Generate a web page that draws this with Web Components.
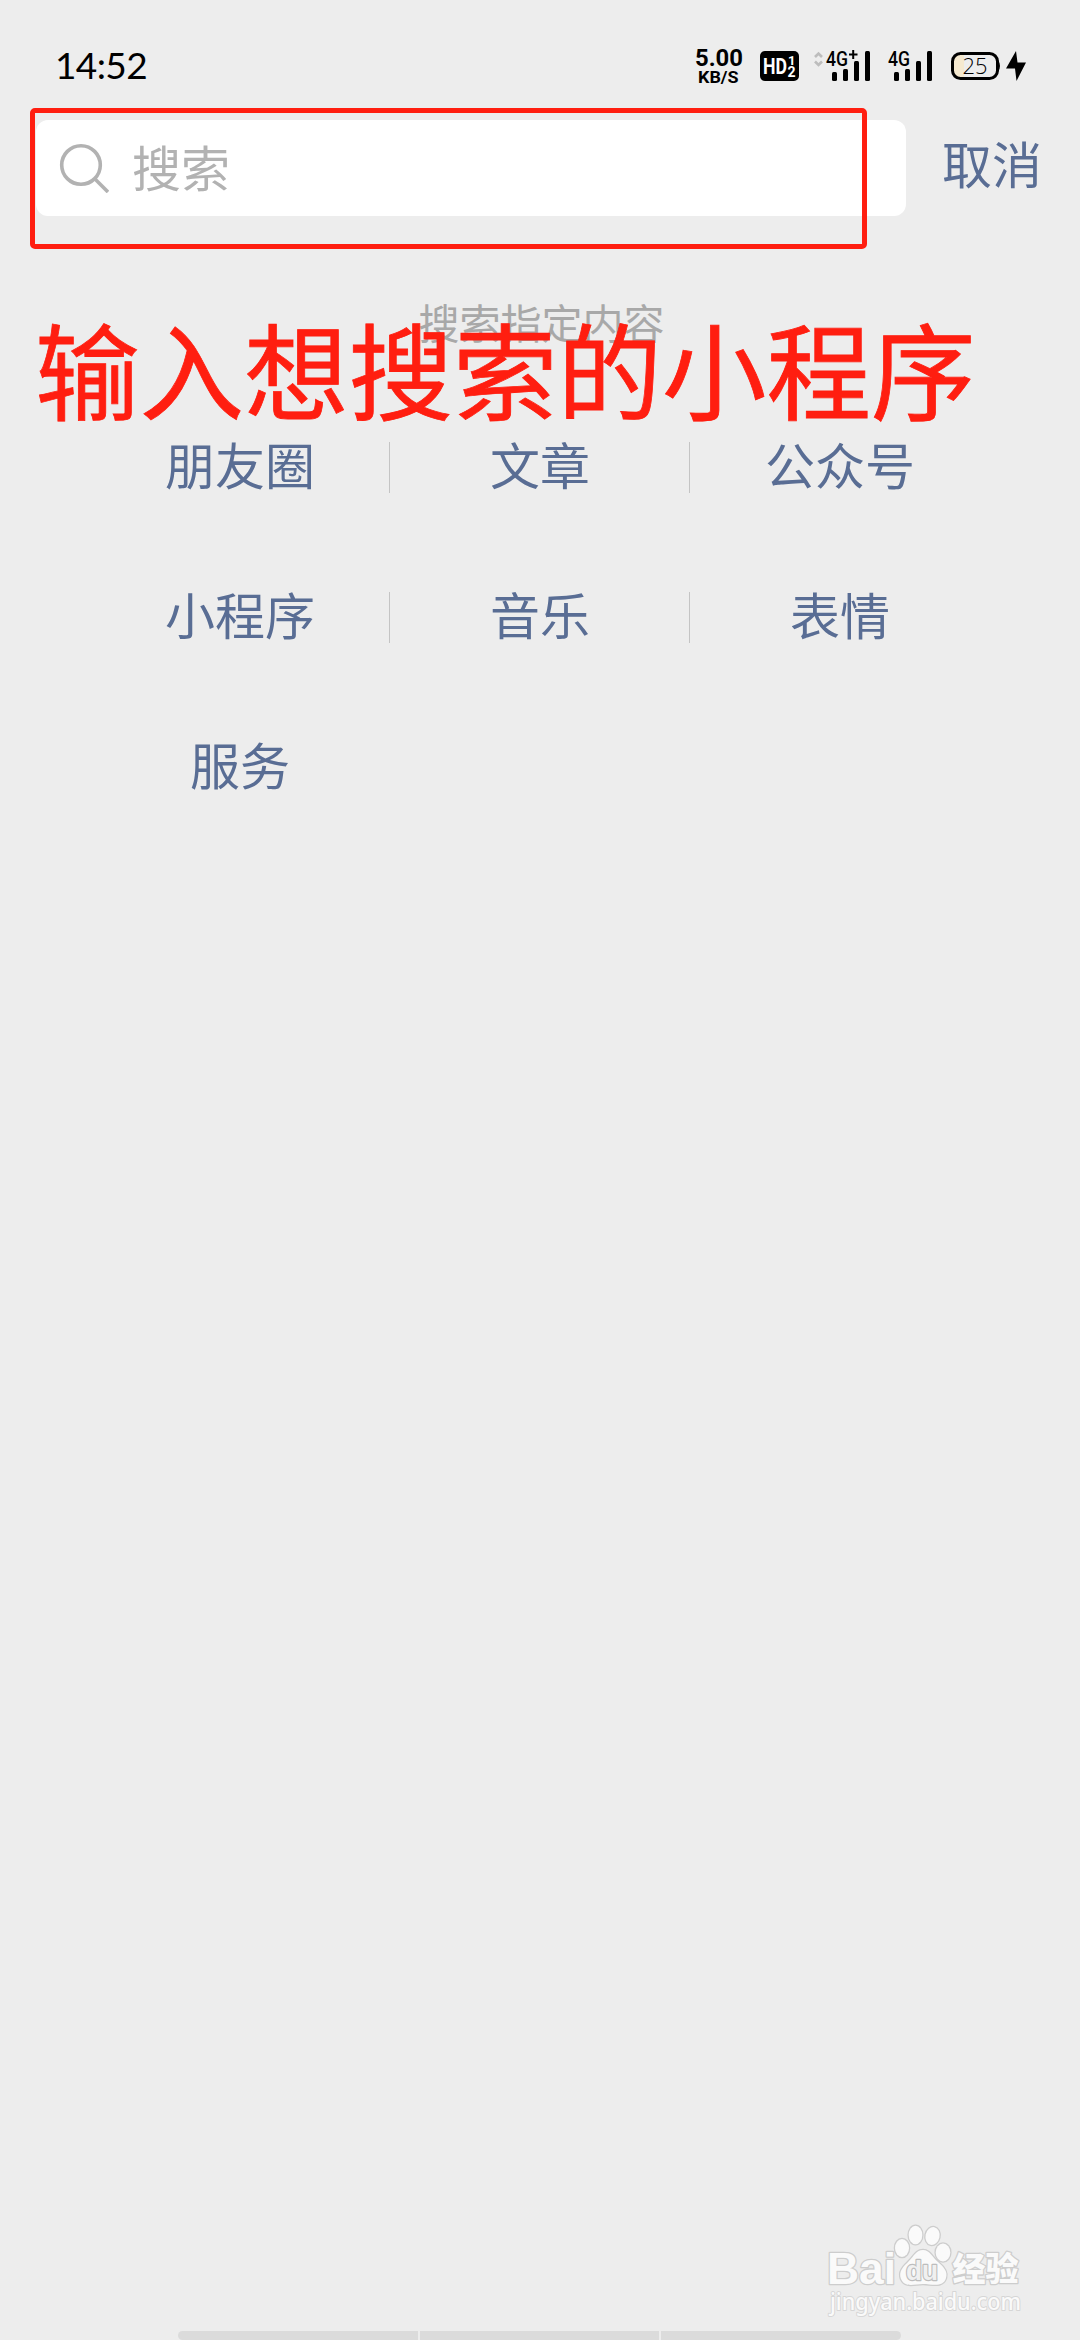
<!DOCTYPE html>
<html lang="zh-CN">
<head>
<meta charset="utf-8">
<title>搜索</title>
<style>
  html, body {
    margin: 0;
    height: 100%;
    background: #ededed;
    overflow: hidden;
  }
  body {
    font-family: Roboto, "Noto Sans CJK SC", sans-serif;
    --link: #596d94;
    --mark: #ff1e10;
  }
</style>
</head>
<body>
<search-page></search-page>

<script>
class NetSpeed extends HTMLElement {
  constructor() {
    super();
    this.attachShadow({ mode: 'open' }).innerHTML = `
      <style>
        :host { display: block; width: 47px; height: 30px; }
        svg { display: block; overflow: visible; }
        text { font-family: Roboto, sans-serif; font-weight: 700; }
      </style>
      <svg width="47" height="30">
        <text x="0" y="15" font-size="24" textLength="48" lengthAdjust="spacingAndGlyphs">5.00</text>
        <text x="3" y="32" font-size="17" textLength="40.5" lengthAdjust="spacingAndGlyphs">KB/S</text>
      </svg>
    `;
  }
}
customElements.define("net-speed", NetSpeed);

class HdBadge extends HTMLElement {
  constructor() {
    super();
    this.attachShadow({ mode: 'open' }).innerHTML = `
      <style>
        :host { display: block; width: 39px; height: 30px; }
        svg { display: block; }
        text { font-family: Roboto, sans-serif; font-weight: 700; fill: #fff; }
      </style>
      <svg width="39" height="30">
        <rect width="39" height="30" rx="5"/>
        <text x="3" y="23" font-size="22" textLength="24" lengthAdjust="spacingAndGlyphs">HD</text>
        <text x="28" y="14" font-size="13">1</text>
        <text x="27.500" y="25.5" font-size="14">2</text>
      </svg>
    `;
  }
}
customElements.define("hd-badge", HdBadge);

class SignalMeter extends HTMLElement {
  connectedCallback() {
    const plus = this.hasAttribute("plus");
    // the data arrows take 12px in front of the label
    const x = plus ? 12 : 0;
    const bars = [[6, 21], [17, 18], [28, 10], [39, 0]];
    this.attachShadow({ mode: 'open' }).innerHTML = `
      <style>
        :host { display: block; height: 30px; }
        svg { display: block; overflow: visible; }
        text { font-family: Roboto, sans-serif; font-weight: 500; }
      </style>
      <svg width="${x + 44}" height="30">
        ${plus ? `
          <path d="M1 6 L4.5 2.5 L8 6 M1 10.5 L4.5 14 L8 10.5" fill="none" stroke="#bdbdbd" stroke-width="2.6"/>
          <path d="M35 3.5 h8.5 M39.2 -1 v9" stroke="#000" stroke-width="2"/>
        ` : ""}
        <text x="${x}" y="15" font-size="20.5" textLength="22" lengthAdjust="spacingAndGlyphs">4G</text>
        ${bars.map(([bx, by]) => `<rect x="${x + bx}" y="${by}" width="5" height="${30 - by}" rx="1.5"/>`).join("")}
      </svg>
    `;
  }
}
customElements.define("signal-meter", SignalMeter);

class BatteryMeter extends HTMLElement {
  constructor() {
    super();
    this.attachShadow({ mode: 'open' }).innerHTML = `
      <style>
        :host { display: block; width: 75px; height: 30px; }
        svg { display: block; overflow: visible; }
        text { font-family: "Open Sans", sans-serif; font-size: 21.5px; font-weight: 300; }
      </style>
      <svg width="75" height="30">
        <path d="M13 3 H10 Q1.5 3 1.5 11 V19 Q1.5 27 10 27 H13 Z" fill="#f5e9cf"/>
        <rect x="1.5" y="2.5" width="45" height="25" rx="8" fill="none" stroke="#000" stroke-width="3"/>
        <path d="M47 9 Q51 15 47 21 Z"/>
        <text x="11.5" y="22.5" textLength="25" lengthAdjust="spacingAndGlyphs">25</text>
        <path d="M65 0 L55 17.5 H64 L65.5 30 L75 11.5 H66.5 Z"/>
      </svg>
    `;
  }
}
customElements.define("battery-meter", BatteryMeter);

class StatusBar extends HTMLElement {
  constructor() {
    super();
    this.attachShadow({ mode: 'open' }).innerHTML = `
      <style>
        :host {
          display: flex;
          align-items: flex-start;
          box-sizing: border-box;
          height: 120px;
          padding: 51px 54px 0 55px;
          color: #000;
        }
        time {
          font: 400 37px/28px Lato, sans-serif;
          letter-spacing: -0.6px;
          margin-right: auto;
        }
        hd-badge { margin-left: 18px; }
        signal-meter { margin-left: 15px; }
        signal-meter + signal-meter { margin-left: 18px; }
        battery-meter { margin-left: 19px; }
      </style>
      <time>14:52</time>
      <net-speed></net-speed>
      <hd-badge></hd-badge>
      <signal-meter plus></signal-meter>
      <signal-meter></signal-meter>
      <battery-meter></battery-meter>
    `;
  }
}
customElements.define("status-bar", StatusBar);

class SearchBar extends HTMLElement {
  constructor() {
    super();
    this.attachShadow({ mode: 'open' }).innerHTML = `
      <style>
        :host { display: flex; height: 96px; padding-left: 36px; }
        .field {
          display: flex;
          align-items: center;
          width: 870px;
          background: #fff;
          border-radius: 12px;
          color: #b2b2b2;
          font-size: 49px;
        }
        .text { padding-bottom: 6px; }
        svg { margin: 0 23px 0 23px; }
        .cancel {
          margin-left: 36px;
          font-size: 50px;
          line-height: 95px;
          color: var(--link);
        }
      </style>
      <div class="field">
        <svg width="50" height="50" fill="none" stroke="#b2b2b2" stroke-width="3.6">
          <circle cx="22" cy="22" r="19.3"/>
          <path d="M35.5 35.5 L49 49"/>
        </svg>
        <div class="text"><slot></slot></div>
      </div>
      <div class="cancel"><slot name="cancel"></slot></div>
    `;
  }
}
customElements.define("search-bar", SearchBar);

class CategoryGrid extends HTMLElement {
  constructor() {
    super();
    this.attachShadow({ mode: 'open' }).innerHTML = `
      <style>
        :host {
          display: grid;
          grid-template-columns: repeat(3, 300px);
          grid-auto-rows: 150px;
          justify-content: center;
        }
        ::slotted(*) {
          display: flex;
          align-items: center;
          justify-content: center;
          box-sizing: border-box;
          padding-bottom: 8px;
          font-size: 50px;
          color: var(--link);
          background: linear-gradient(#c4c4c4, #c4c4c4) no-repeat 299px 50px / 0 51px;
        }
        /* thin line after the first two columns */
        ::slotted(.line) { background-size: 1px 51px; }
      </style>
      <slot></slot>
    `;
  }
}
customElements.define("category-grid", CategoryGrid);

class NavHint extends HTMLElement {
  constructor() {
    super();
    this.attachShadow({ mode: 'open' }).innerHTML = `
      <style>
        :host {
          display: flex;
          gap: 2px;
          width: 723px;
          height: 9px;
          border-radius: 5px;
          overflow: hidden;
        }
        i { flex: 1; background: #dbdbdb; }
      </style>
      <i></i><i></i><i></i>
    `;
  }
}
customElements.define("nav-hint", NavHint);

class BaiduMark extends HTMLElement {
  constructor() {
    super();
    this.attachShadow({ mode: 'open' }).innerHTML = `
      <style>
        :host { display: block; }
        svg { display: block; overflow: visible; }
        svg > * { fill: #fafafa; stroke: #cdcdcd; stroke-width: 2.6; paint-order: stroke; stroke-linejoin: round; }
        .latin { font-family: "Liberation Sans", sans-serif; font-weight: 700; }
        .han { font-family: "Noto Sans CJK SC", sans-serif; font-weight: 900; }
        .site { font-family: "Noto Sans", sans-serif; font-weight: 500; stroke: #d6d6d6; stroke-width: 2; }
        .du { fill: #f0f0f0; stroke: #bdbdbd; stroke-width: 2.4; }
      </style>
      <svg width="200" height="96">
        <text class="latin" x="-2" y="60" font-size="44" textLength="69" lengthAdjust="spacingAndGlyphs">Bai</text>
        <ellipse cx="73" cy="24" rx="7" ry="9"/>
        <ellipse cx="86.5" cy="11" rx="6.8" ry="9.3"/>
        <ellipse cx="103.5" cy="12" rx="7" ry="9" transform="rotate(12 103.5 12)"/>
        <ellipse cx="114" cy="28.5" rx="7.3" ry="9"/>
        <path d="M94 26 C101 26 103 33 109 38 C115 43 119 48 117 54 C114 64 103 60 94 60 C85 60 76 64 72 55 C69 47 75 42 80 37 C85 32 87 26 94 26 Z"/>
        <text class="latin du" x="77" y="56" font-size="27" textLength="32" lengthAdjust="spacingAndGlyphs">du</text>
        <text class="han" x="123.5" y="57" font-size="33" textLength="66" lengthAdjust="spacingAndGlyphs">经验</text>
        <text class="site" x="1" y="86" font-size="23" textLength="191" lengthAdjust="spacingAndGlyphs">jingyan.baidu.com</text>
      </svg>
    `;
  }
}
customElements.define("baidu-mark", BaiduMark);

class SearchPage extends HTMLElement {
  constructor() {
    super();
    this.attachShadow({ mode: 'open' }).innerHTML = `
      <style>
        :host {
          position: relative;
          display: flex;
          flex-direction: column;
          width: 1080px;
          height: 2340px;
          overflow: hidden;
        }
        .hint {
          margin-top: 82px;
          height: 94px;
          text-align: center;
          font-size: 41px;
          line-height: 54px;
          color: #a8a8a8;
          padding-left: 3px;
        }
        nav-hint { margin: auto 0 0 178px; }
        /* notes drawn over the page */
        .frame {
          position: absolute;
          left: 30px;
          top: 108px;
          width: 827px;
          height: 131px;
          border: 5px solid var(--mark);
          border-radius: 5px;
        }
        .note {
          position: absolute;
          left: 35px;
          top: 317px;
          font-size: 104.5px;
          line-height: 120px;
          white-space: nowrap;
          color: var(--mark);
          -webkit-text-stroke: 0.8px var(--mark);
        }
        baidu-mark { position: absolute; left: 829px; top: 2224px; }
      </style>
      <status-bar></status-bar>
      <search-bar>搜索<span slot="cancel">取消</span></search-bar>
      <div class="hint">搜索指定内容</div>
      <category-grid>
        <span class="line">朋友圈</span>
        <span class="line">文章</span>
        <span>公众号</span>
        <span class="line">小程序</span>
        <span class="line">音乐</span>
        <span>表情</span>
        <span>服务</span>
      </category-grid>
      <nav-hint></nav-hint>
      <div class="frame"></div>
      <div class="note">输入想搜索的小程序</div>
      <baidu-mark></baidu-mark>
    `;
  }
}
customElements.define("search-page", SearchPage);
</script>
</body>
</html>
